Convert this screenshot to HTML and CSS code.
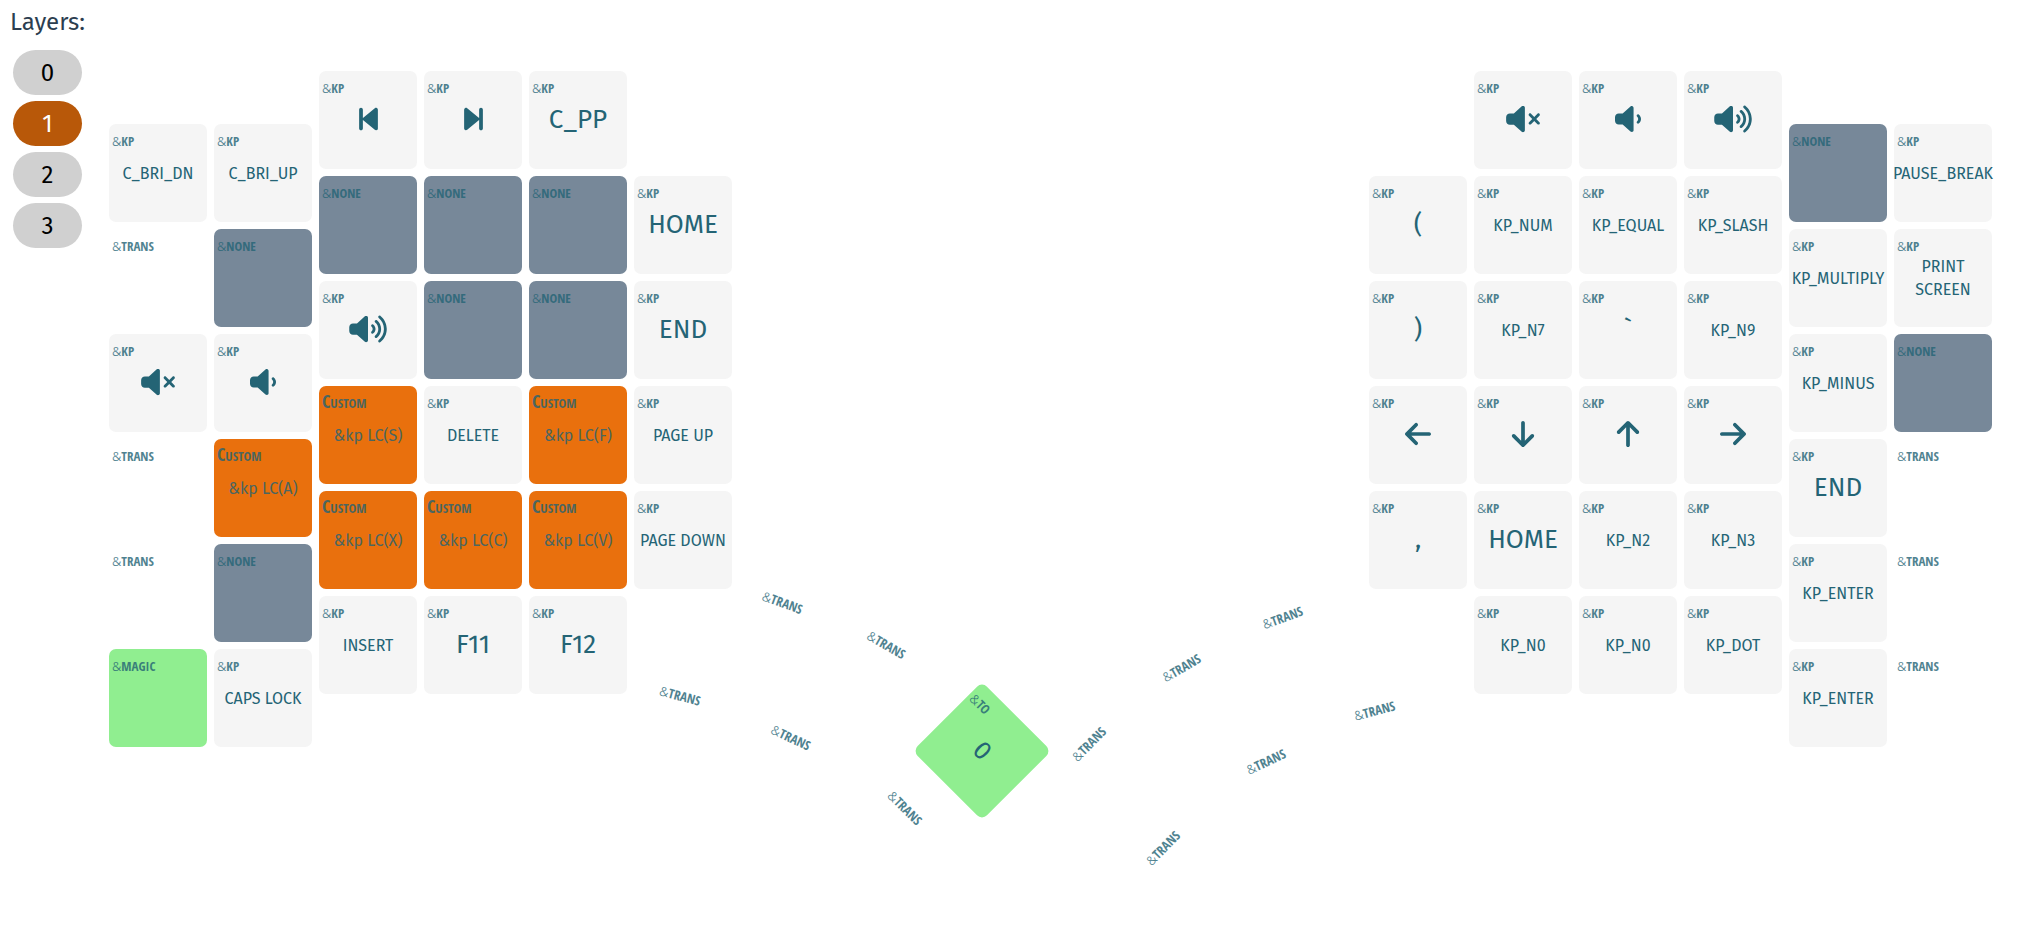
FILE: index.html
```html
<!DOCTYPE html>
<html lang="en">
<head>
<meta charset="utf-8">
<title>Keymap Editor</title>
<link rel="stylesheet" href="styles.css">
</head>
<body>
<svg class="sprite" aria-hidden="true">
  <symbol id="prev" viewBox="0 0 320 512"><path d="M267.5 440.6c9.5 7.9 22.8 9.7 34.1 4.4s18.4-16.6 18.4-29V96c0-12.4-7.2-23.7-18.4-29s-24.5-3.6-34.1 4.4l-192 160L64 241V96c0-17.7-14.3-32-32-32S0 78.3 0 96V416c0 17.7 14.3 32 32 32s32-14.3 32-32V271l11.5 9.6 192 160z"/></symbol>
  <symbol id="next" viewBox="0 0 320 512"><path transform="matrix(-1 0 0 1 320 0)" d="M267.5 440.6c9.5 7.9 22.8 9.7 34.1 4.4s18.4-16.6 18.4-29V96c0-12.4-7.2-23.7-18.4-29s-24.5-3.6-34.1 4.4l-192 160L64 241V96c0-17.7-14.3-32-32-32S0 78.3 0 96V416c0 17.7 14.3 32 32 32s32-14.3 32-32V271l11.5 9.6 192 160z"/></symbol>
  <symbol id="arrow" viewBox="0 0 448 512"><path d="M9.4 233.4c-12.5 12.5-12.5 32.8 0 45.3l160 160c12.5 12.5 32.8 12.5 45.3 0s12.5-32.8 0-45.3L109.2 288 416 288c17.7 0 32-14.3 32-32s-14.3-32-32-32l-306.7 0L214.6 118.6c12.5-12.5 12.5-32.8 0-45.3s-32.8-12.5-45.3 0l-160 160z"/></symbol>
  <symbol id="mute" viewBox="0 0 576 512"><path d="M301.1 34.8C312.6 40 320 51.4 320 64V448c0 12.6-7.4 24-18.9 29.2s-25 3.1-34.4-5.3L131.8 352H64c-35.3 0-64-28.7-64-64V224c0-35.3 28.7-64 64-64h67.8L266.7 40.1c9.4-8.4 22.9-10.4 34.4-5.3zM425 167l55 55 55-55c9.4-9.4 24.6-9.4 33.9 0s9.4 24.6 0 33.9l-55 55 55 55c9.4 9.4 9.4 24.6 0 33.9s-24.6 9.4-33.9 0l-55-55-55 55c-9.4 9.4-24.6 9.4-33.9 0s-9.4-24.6 0-33.9l55-55-55-55c-9.4-9.4-9.4-24.6 0-33.9s24.6-9.4 33.9 0z"/></symbol>
  <symbol id="low" viewBox="0 0 448 512"><path d="M301.1 34.8C312.6 40 320 51.4 320 64V448c0 12.6-7.4 24-18.9 29.2s-25 3.1-34.4-5.3L131.8 352H64c-35.3 0-64-28.7-64-64V224c0-35.3 28.7-64 64-64h67.8L266.7 40.1c9.4-8.4 22.9-10.4 34.4-5.3zM412.6 181.5C434.1 199.1 448 225.9 448 256s-13.9 56.9-35.4 74.5c-10.3 8.4-25.4 6.8-33.8-3.5s-6.8-25.4 3.5-33.8C393.1 284.4 400 271 400 256s-6.9-28.4-17.7-37.3c-10.3-8.4-11.8-23.5-3.5-33.8s23.5-11.8 33.8-3.5z"/></symbol>
  <symbol id="high" viewBox="0 0 640 512"><path d="M301.1 34.8C312.6 40 320 51.4 320 64V448c0 12.6-7.4 24-18.9 29.2s-25 3.1-34.4-5.3L131.8 352H64c-35.3 0-64-28.7-64-64V224c0-35.3 28.7-64 64-64h67.8L266.7 40.1c9.4-8.4 22.9-10.4 34.4-5.3zM412.6 181.5C434.1 199.1 448 225.9 448 256s-13.9 56.9-35.4 74.5c-10.3 8.4-25.4 6.8-33.8-3.5s-6.8-25.4 3.5-33.8C393.1 284.4 400 271 400 256s-6.9-28.4-17.7-37.3c-10.3-8.4-11.8-23.5-3.5-33.8s23.5-11.8 33.8-3.5zM473.1 107c43.2 35.2 70.9 88.9 70.9 149s-27.7 113.8-70.9 149c-10.3 8.4-25.4 6.8-33.8-3.5s-6.8-25.4 3.5-33.8C475.3 341.3 496 301.1 496 256s-20.7-85.5-53.2-111.8c-10.3-8.4-11.8-23.5-3.5-33.8s23.5-11.8 33.8-3.5zM533.6 32.5C598.5 85.3 640 165.8 640 256s-41.5 170.8-106.4 223.5c-10.3 8.4-25.4 6.8-33.8-3.5s-6.8-25.4 3.5-33.8C557.5 398.2 592 331.2 592 256s-34.5-142.2-88.7-186.3c-10.3-8.4-11.8-23.5-3.5-33.8s23.5-11.8 33.8-3.5z"/></symbol>
</svg>
<div class="app">
  <nav class="layers">
    <p class="layers-title">Layers:</p>
    <button class="layer" type="button">0</button>
    <button class="layer active" type="button">1</button>
    <button class="layer" type="button">2</button>
    <button class="layer" type="button">3</button>
  </nav>
  <main class="keyboard">
    <div class="half">
      <div class="column low">
        <div class="key"><span class="bind"><i>&amp;</i>kp</span><span class="code">C_BRI_DN</span></div>
        <div class="key trans"><span class="bind"><i>&amp;</i>trans</span></div>
        <div class="key"><span class="bind"><i>&amp;</i>kp</span><svg class="icon w576"><use href="#mute"/></svg></div>
        <div class="key trans"><span class="bind"><i>&amp;</i>trans</span></div>
        <div class="key trans"><span class="bind"><i>&amp;</i>trans</span></div>
        <div class="key green"><span class="bind"><i>&amp;</i>magic</span></div>
      </div>
      <div class="column low">
        <div class="key"><span class="bind"><i>&amp;</i>kp</span><span class="code">C_BRI_UP</span></div>
        <div class="key none"><span class="bind"><i>&amp;</i>none</span></div>
        <div class="key"><span class="bind"><i>&amp;</i>kp</span><svg class="icon w448"><use href="#low"/></svg></div>
        <div class="key custom"><span class="bind">Custom</span><span class="code">&amp;kp LC(A)</span></div>
        <div class="key none"><span class="bind"><i>&amp;</i>none</span></div>
        <div class="key"><span class="bind"><i>&amp;</i>kp</span><span class="code">CAPS LOCK</span></div>
      </div>
      <div class="column">
        <div class="key"><span class="bind"><i>&amp;</i>kp</span><svg class="icon w320"><use href="#prev"/></svg></div>
        <div class="key none"><span class="bind"><i>&amp;</i>none</span></div>
        <div class="key"><span class="bind"><i>&amp;</i>kp</span><svg class="icon w640"><use href="#high"/></svg></div>
        <div class="key custom"><span class="bind">Custom</span><span class="code">&amp;kp LC(S)</span></div>
        <div class="key custom"><span class="bind">Custom</span><span class="code">&amp;kp LC(X)</span></div>
        <div class="key"><span class="bind"><i>&amp;</i>kp</span><span class="code">INSERT</span></div>
      </div>
      <div class="column">
        <div class="key"><span class="bind"><i>&amp;</i>kp</span><svg class="icon w320"><use href="#next"/></svg></div>
        <div class="key none"><span class="bind"><i>&amp;</i>none</span></div>
        <div class="key none"><span class="bind"><i>&amp;</i>none</span></div>
        <div class="key"><span class="bind"><i>&amp;</i>kp</span><span class="code">DELETE</span></div>
        <div class="key custom"><span class="bind">Custom</span><span class="code">&amp;kp LC(C)</span></div>
        <div class="key"><span class="bind"><i>&amp;</i>kp</span><span class="code big">F11</span></div>
      </div>
      <div class="column">
        <div class="key"><span class="bind"><i>&amp;</i>kp</span><span class="code big">C_PP</span></div>
        <div class="key none"><span class="bind"><i>&amp;</i>none</span></div>
        <div class="key none"><span class="bind"><i>&amp;</i>none</span></div>
        <div class="key custom"><span class="bind">Custom</span><span class="code">&amp;kp LC(F)</span></div>
        <div class="key custom"><span class="bind">Custom</span><span class="code">&amp;kp LC(V)</span></div>
        <div class="key"><span class="bind"><i>&amp;</i>kp</span><span class="code big">F12</span></div>
      </div>
      <div class="column inner">
        <div class="key"><span class="bind"><i>&amp;</i>kp</span><span class="code big">HOME</span></div>
        <div class="key"><span class="bind"><i>&amp;</i>kp</span><span class="code big">END</span></div>
        <div class="key"><span class="bind"><i>&amp;</i>kp</span><span class="code">PAGE UP</span></div>
        <div class="key"><span class="bind"><i>&amp;</i>kp</span><span class="code">PAGE DOWN</span></div>
      </div>
    </div>

    <div class="thumbs">
      <div class="key trans l1"><span class="bind"><i>&amp;</i>trans</span></div>
      <div class="key trans l2"><span class="bind"><i>&amp;</i>trans</span></div>
      <div class="key green l3"><span class="bind"><i>&amp;</i>to</span><span class="code big">0</span></div>
      <div class="key trans l4"><span class="bind"><i>&amp;</i>trans</span></div>
      <div class="key trans l5"><span class="bind"><i>&amp;</i>trans</span></div>
      <div class="key trans l6"><span class="bind"><i>&amp;</i>trans</span></div>
      <div class="key trans r1"><span class="bind"><i>&amp;</i>trans</span></div>
      <div class="key trans r2"><span class="bind"><i>&amp;</i>trans</span></div>
      <div class="key trans r3"><span class="bind"><i>&amp;</i>trans</span></div>
      <div class="key trans r4"><span class="bind"><i>&amp;</i>trans</span></div>
      <div class="key trans r5"><span class="bind"><i>&amp;</i>trans</span></div>
      <div class="key trans r6"><span class="bind"><i>&amp;</i>trans</span></div>
    </div>

    <div class="half">
      <div class="column inner">
        <div class="key"><span class="bind"><i>&amp;</i>kp</span><span class="code big">(</span></div>
        <div class="key"><span class="bind"><i>&amp;</i>kp</span><span class="code big">)</span></div>
        <div class="key"><span class="bind"><i>&amp;</i>kp</span><svg class="icon w448"><use href="#arrow"/></svg></div>
        <div class="key"><span class="bind"><i>&amp;</i>kp</span><span class="code big">,</span></div>
      </div>
      <div class="column">
        <div class="key"><span class="bind"><i>&amp;</i>kp</span><svg class="icon w576"><use href="#mute"/></svg></div>
        <div class="key"><span class="bind"><i>&amp;</i>kp</span><span class="code">KP_NUM</span></div>
        <div class="key"><span class="bind"><i>&amp;</i>kp</span><span class="code">KP_N7</span></div>
        <div class="key"><span class="bind"><i>&amp;</i>kp</span><svg class="icon w448 down"><use href="#arrow"/></svg></div>
        <div class="key"><span class="bind"><i>&amp;</i>kp</span><span class="code big">HOME</span></div>
        <div class="key"><span class="bind"><i>&amp;</i>kp</span><span class="code">KP_N0</span></div>
      </div>
      <div class="column">
        <div class="key"><span class="bind"><i>&amp;</i>kp</span><svg class="icon w448"><use href="#low"/></svg></div>
        <div class="key"><span class="bind"><i>&amp;</i>kp</span><span class="code">KP_EQUAL</span></div>
        <div class="key"><span class="bind"><i>&amp;</i>kp</span><span class="code big">`</span></div>
        <div class="key"><span class="bind"><i>&amp;</i>kp</span><svg class="icon w448 up"><use href="#arrow"/></svg></div>
        <div class="key"><span class="bind"><i>&amp;</i>kp</span><span class="code">KP_N2</span></div>
        <div class="key"><span class="bind"><i>&amp;</i>kp</span><span class="code">KP_N0</span></div>
      </div>
      <div class="column">
        <div class="key"><span class="bind"><i>&amp;</i>kp</span><svg class="icon w640"><use href="#high"/></svg></div>
        <div class="key"><span class="bind"><i>&amp;</i>kp</span><span class="code">KP_SLASH</span></div>
        <div class="key"><span class="bind"><i>&amp;</i>kp</span><span class="code">KP_N9</span></div>
        <div class="key"><span class="bind"><i>&amp;</i>kp</span><svg class="icon w448 right"><use href="#arrow"/></svg></div>
        <div class="key"><span class="bind"><i>&amp;</i>kp</span><span class="code">KP_N3</span></div>
        <div class="key"><span class="bind"><i>&amp;</i>kp</span><span class="code">KP_DOT</span></div>
      </div>
      <div class="column low">
        <div class="key none"><span class="bind"><i>&amp;</i>none</span></div>
        <div class="key"><span class="bind"><i>&amp;</i>kp</span><span class="code">KP_MULTIPLY</span></div>
        <div class="key"><span class="bind"><i>&amp;</i>kp</span><span class="code">KP_MINUS</span></div>
        <div class="key"><span class="bind"><i>&amp;</i>kp</span><span class="code big">END</span></div>
        <div class="key"><span class="bind"><i>&amp;</i>kp</span><span class="code">KP_ENTER</span></div>
        <div class="key"><span class="bind"><i>&amp;</i>kp</span><span class="code">KP_ENTER</span></div>
      </div>
      <div class="column low">
        <div class="key"><span class="bind"><i>&amp;</i>kp</span><span class="code">PAUSE_BREAK</span></div>
        <div class="key"><span class="bind"><i>&amp;</i>kp</span><span class="code">PRINT<br>SCREEN</span></div>
        <div class="key none"><span class="bind"><i>&amp;</i>none</span></div>
        <div class="key trans"><span class="bind"><i>&amp;</i>trans</span></div>
        <div class="key trans"><span class="bind"><i>&amp;</i>trans</span></div>
        <div class="key trans"><span class="bind"><i>&amp;</i>trans</span></div>
      </div>
    </div>
  </main>
</div>
</body>
</html>
```
FILE: styles.css
```css
* { box-sizing: border-box; }

body {
  margin: 0;
  background: #fff;
  color: #2c3e50;
  font-family: "Fira Sans", "Noto Sans", sans-serif;
}

.sprite { display: none; }

.app {
  display: flex;
  align-items: flex-start;
  gap: 14px;
  min-height: 100vh;
}

.layers {
  display: flex;
  flex-direction: column;
  align-items: center;
  gap: 6px;
  width: 95px;
  padding-top: 4px;
}

.layers-title {
  align-self: flex-start;
  margin: 0 0 4px;
  padding-left: 10px;
  font-size: 24px;
  line-height: 36px;
  white-space: nowrap;
}

.layer {
  width: 69px;
  height: 45px;
  padding: 0;
  border: 0;
  border-radius: 23px;
  background: #d0d0d0;
  color: #000;
  font: inherit;
  font-size: 24px;
  cursor: pointer;
}

.layer.active {
  background: #b85809;
  color: #fff;
}

.keyboard {
  display: flex;
  flex: 1;
  align-items: stretch;
  padding: 71px 32px 0 0;
}

.half { display: flex; gap: 7px; }

.column {
  display: flex;
  flex-direction: column;
  gap: 7px;
}

.column.low { padding-top: 53px; }
.column.inner { padding-top: 105px; }

.key {
  display: grid;
  grid-template-columns: 98px;
  place-items: center;
  width: 98px;
  height: 98px;
  border-radius: 7px;
  background: #f5f5f5;
  color: #246475;
}

.key > * { grid-area: 1 / 1; }

.key.none { background: #778899; }
.key.custom { background: #e9700d; }
.key.green { background: #90ee90; }
.key.trans { background: transparent; }

.bind {
  place-self: start;
  padding: 5px 0 0 3px;
  font-family: "Open Sans Condensed", "Open Sans", sans-serif;
  font-size: 19px;
  font-weight: 700;
  font-variant: small-caps;
  line-height: 20px;
  opacity: 0.8;
}

.bind i {
  font-family: "Noto Sans", sans-serif;
  font-size: 16px;
  font-style: normal;
  font-weight: 300;
}

.custom .bind { font-size: 18px; }

.code {
  font-size: 16px;
  line-height: 23px;
  text-align: center;
  white-space: nowrap;
}

.code.big {
  font-size: 26px;
  line-height: 36px;
}

.custom .code { opacity: 0.8; }

.icon {
  height: 30px;
  margin-bottom: 2px;
  fill: currentColor;
}

.w320 { width: 19px; }
.w448 { width: 26px; }
.w576 { width: 34px; }
.w640 { width: 38px; }
.up { transform: rotate(90deg); }
.right { transform: rotate(180deg); }
.down { transform: rotate(270deg); }

/* Thumb clusters: each key is placed and turned on its own */
.thumbs { position: relative; flex: 1; }
.thumbs .key { position: absolute; }
.l1 { left: 14px; top: 521px; transform: rotate(20deg); }
.l2 { left: 111px; top: 565px; transform: rotate(30deg); }
.l3 { left: 201px; top: 631px; transform: rotate(45deg); }
.l4 { left: -85px; top: 613px; transform: rotate(15deg); }
.l5 { left: 19px; top: 657px; transform: rotate(25deg); }
.l6 { left: 119px; top: 728px; transform: rotate(45deg); }
.r1 { right: 3px; top: 519px; transform: rotate(-20deg); }
.r2 { right: 101px; top: 563px; transform: rotate(-30deg); }
.r3 { right: 191px; top: 629px; transform: rotate(-45deg); }
.r4 { right: -87px; top: 615px; transform: rotate(-15deg); }
.r5 { right: 18px; top: 660px; transform: rotate(-25deg); }
.r6 { right: 117px; top: 733px; transform: rotate(-45deg); }
```
